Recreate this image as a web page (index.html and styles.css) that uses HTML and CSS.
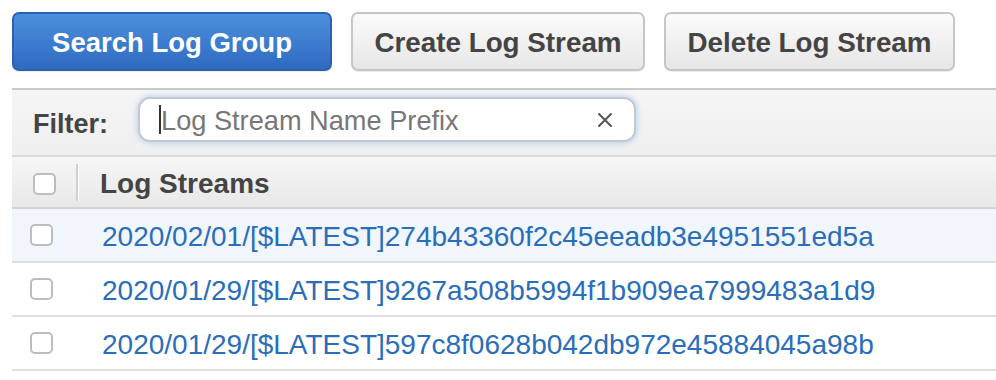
FILE: index.html
```html
<!DOCTYPE html>
<html lang="en">

<head>
    <meta charset="UTF-8">
    <meta name="viewport" content="width=device-width, initial-scale=1.0">
    <title>Log Streams</title>
    <link rel="stylesheet" href="styles.css">
</head>

<body>
    <div class="toolbar">
        <button type="button" class="btn btn-primary">Search Log Group</button>
        <button type="button" class="btn">Create Log Stream</button>
        <button type="button" class="btn">Delete Log Stream</button>
    </div>

    <div class="panel">
        <div class="filter-bar">
            <label class="filter-label">Filter:</label>
            <div class="search-box">
                <span class="caret"></span>
                <span class="placeholder">Log Stream Name Prefix</span>
                <span class="clear">
                    <svg width="16" height="16" viewBox="0 0 16 16">
                        <path d="M2 2 L14 14 M14 2 L2 14" stroke="#555" stroke-width="2" stroke-linecap="round" />
                    </svg>
                </span>
            </div>
        </div>

        <div class="table-head">
            <div class="check-cell"><span class="check"></span></div>
            <div class="divider"></div>
            <div class="head-title">Log Streams</div>
        </div>

        <div class="row row-hover">
            <span class="check"></span>
            <a href="#" class="stream-link">2020/02/01/[$LATEST]274b43360f2c45eeadb3e4951551ed5a</a>
        </div>
        <div class="row">
            <span class="check"></span>
            <a href="#" class="stream-link">2020/01/29/[$LATEST]9267a508b5994f1b909ea7999483a1d9</a>
        </div>
        <div class="row">
            <span class="check"></span>
            <a href="#" class="stream-link">2020/01/29/[$LATEST]597c8f0628b042db972e45884045a98b</a>
        </div>
    </div>
</body>

</html>
```

FILE: styles.css
```css
html,
body {
    margin: 0;
    background: #fff;
    font-family: "Liberation Sans", Arial, sans-serif;
}

.toolbar {
    display: flex;
    gap: 19px;
    height: 76px;
    padding: 12px 0 0 12px;
}

.btn {
    height: 59px;
    padding: 3px 0 0;
    border: 2px solid #c6c6c6;
    border-radius: 7px;
    background: linear-gradient(#fafafa, #e7e7e7);
    color: #444;
    font-family: "Liberation Sans", Arial, sans-serif;
    font-size: 27.8px;
    font-weight: bold;
    box-shadow: 0 1px 1px rgba(0, 0, 0, .08);
}

.btn-primary {
    width: 320px;
    border-color: #2b62b0;
    background: linear-gradient(#4c8fdc, #2e6bc1);
    color: #fff;
    font-size: 27.5px;
}

.btn:nth-child(2) {
    width: 294px;
}

.btn:nth-child(3) {
    width: 291px;
}

.panel {
    margin-left: 12px;
    border-top: 2px solid #c9c9c9;
}

.filter-bar {
    display: flex;
    align-items: center;
    gap: 30px;
    height: 65px;
    padding-left: 21px;
    background: linear-gradient(#f5f5f5, #efefef);
    border-bottom: 2px solid #d9d9d9;
}

.filter-label {
    padding-top: 4px;
    font-size: 27px;
    font-weight: bold;
    color: #444;
}

.search-box {
    display: flex;
    align-items: center;
    box-sizing: border-box;
    width: 498px;
    height: 45px;
    margin-bottom: 6px;
    padding: 0 20px 0 19px;
    background: #fff;
    border: 2px solid #c4c9d0;
    border-radius: 12px;
    box-shadow: 0 0 6px rgba(110, 165, 230, .55);
}

.caret {
    width: 2px;
    height: 29px;
    background: #333;
}

.placeholder {
    flex: 1;
    padding-top: 2px;
    font-size: 27.2px;
    color: #777;
}

.clear {
    display: flex;
    margin-right: 1px;
}

.table-head {
    display: flex;
    align-items: center;
    height: 50px;
    background: linear-gradient(#f6f6f6, #e8e8e8);
    border-bottom: 2px solid #d3d3d3;
}

.check-cell {
    display: flex;
    width: 64px;
    padding: 3px 0 0 21px;
    box-sizing: border-box;
}

.divider {
    width: 2px;
    height: 37px;
    background: #d0d0d0;
    box-shadow: 1px 0 0 #fff;
}

.head-title {
    padding: 4px 0 0 22px;
    font-size: 28px;
    font-weight: bold;
    color: #444;
}

.check {
    display: block;
    box-sizing: border-box;
    width: 23px;
    height: 22px;
    background: #fff;
    border: 2px solid #bdbdbd;
    border-radius: 5px;
}

.row {
    display: flex;
    align-items: center;
    gap: 49px;
    height: 52px;
    padding-left: 18px;
    border-bottom: 2px solid #dedede;
}

.row-hover {
    background: #f1f6fd;
}

.stream-link {
    padding-top: 4px;
    font-size: 28px;
    color: #2a6dba;
    text-decoration: none;
}
```
